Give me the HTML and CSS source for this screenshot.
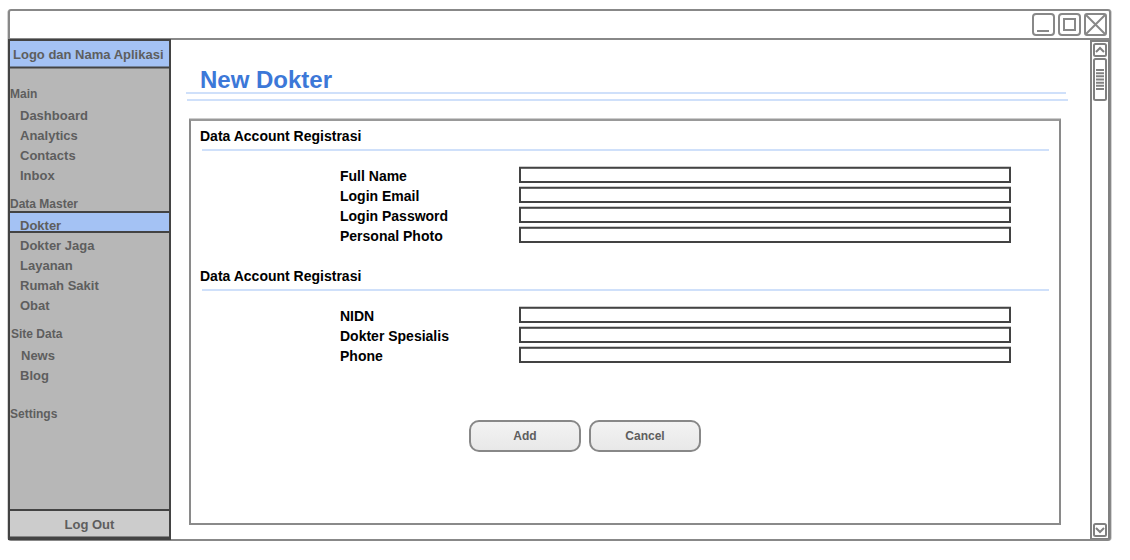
FILE: index.html
```html
<!DOCTYPE html>
<html lang="id">
<head>
<meta charset="utf-8">
<title>New Dokter</title>
<link rel="stylesheet" href="styles.css">
</head>
<body>
<div class="window">
  <header class="titlebar">
    <svg class="controls" width="78" height="26" viewBox="0 0 78 26">
      <rect x="3" y="3" width="21" height="21" rx="3"/>
      <path d="M7 20h12"/>
      <rect x="29" y="3" width="21" height="21" rx="3"/>
      <rect x="34" y="8" width="11" height="11"/>
      <rect x="55" y="3" width="21" height="21" rx="2"/>
      <path d="M55.500 3.500l20 20M75.500 3.500l-20 20"/>
    </svg>
  </header>
  <div class="body">
    <aside class="sidebar">
      <div class="brand">Logo dan Nama Aplikasi</div>
      <nav class="menu">
        <h2 class="group">Main</h2>
        <a class="item">Dashboard</a>
        <a class="item">Analytics</a>
        <a class="item">Contacts</a>
        <a class="item">Inbox</a>
        <h2 class="group">Data Master</h2>
        <a class="item active">Dokter</a>
        <a class="item">Dokter Jaga</a>
        <a class="item">Layanan</a>
        <a class="item">Rumah Sakit</a>
        <a class="item">Obat</a>
        <h2 class="group shifted">Site Data</h2>
        <a class="item shifted">News</a>
        <a class="item">Blog</a>
        <h2 class="group settings">Settings</h2>
      </nav>
      <div class="logout">Log Out</div>
    </aside>
    <main class="main">
      <h1 class="title">New Dokter</h1>
      <div class="rule"></div>
      <div class="rule lower"></div>
      <form class="panel">
        <h3 class="legend">Data Account Registrasi</h3>
        <div class="fields">
          <label class="field"><span>Full Name</span><input type="text"></label>
          <label class="field"><span>Login Email</span><input type="text"></label>
          <label class="field"><span>Login Password</span><input type="text"></label>
          <label class="field"><span>Personal Photo</span><input type="text"></label>
        </div>
        <h3 class="legend">Data Account Registrasi</h3>
        <div class="fields">
          <label class="field"><span>NIDN</span><input type="text"></label>
          <label class="field"><span>Dokter Spesialis</span><input type="text"></label>
          <label class="field"><span>Phone</span><input type="text"></label>
        </div>
        <div class="actions">
          <button class="button" type="button">Add</button>
          <button class="button" type="button">Cancel</button>
        </div>
      </form>
    </main>
    <div class="scrollbar">
      <svg width="14" height="14" viewBox="0 0 14 14"><rect x="1" y="1" width="12" height="12" rx="1.500"/><path d="M3 9l4-4 4 4"/></svg>
      <svg class="thumb" width="14" height="43" viewBox="0 0 14 43">
        <rect x="1" y="1" width="12" height="41" rx="1.500"/>
        <path d="M3 12h8M3 15.170h8M3 18.340h8M3 21.500h8M3 24.670h8M3 27.840h8M3 31h8"/>
      </svg>
      <svg class="down" width="14" height="14" viewBox="0 0 14 14"><rect x="1" y="1" width="12" height="12" rx="1.500"/><path d="M3 5l4 4 4-4"/></svg>
    </div>
  </div>
</div>
</body>
</html>
```
FILE: styles.css
```css
* { box-sizing: border-box; }
body {
  margin: 0;
  padding: 9px 0 0 8px;
  background: #fff;
  font-family: "Liberation Sans", Arial, sans-serif;
  font-weight: bold;
}
h1, h2, h3 { margin: 0; }
.window {
  display: flex;
  flex-direction: column;
  width: 1103px;
  height: 532px;
  border: 2px solid #888;
  border-radius: 3px;
  box-shadow: 1px 0 0 -0.5px #aaa, -1px 0 0 -0.5px #aaa;
}
.titlebar {
  display: flex;
  justify-content: flex-end;
  height: 29px;
  padding-right: 1px;
  border-bottom: 2px solid #888;
}
.controls {
  fill: none;
  stroke: #888;
  stroke-width: 2;
}
.body { display: flex; flex: 1; min-height: 0; }

.sidebar {
  display: flex;
  flex-direction: column;
  width: 163px;
  margin: -1px 0 -1px -2px;
  border: 2px solid #434343;
  border-bottom-width: 3px;
  background: #b7b7b7;
  color: #5e5e5e;
  position: relative;
}
.brand {
  height: 28px;
  padding-left: 3px;
  background: linear-gradient(#a4c2f4 25px, #74839b 25px 26px, #434343 26px 27px, #7d7d7d 27px);
  font-size: 13px;
  line-height: 27px;
  white-space: nowrap;
}
.menu { flex: 1; padding-top: 15px; }
.group {
  height: 20px;
  font-size: 12px;
  line-height: 20px;
}
.item {
  display: block;
  height: 20px;
  padding-left: 10px;
  font-size: 13px;
  line-height: 20px;
}
.group + .item { margin-top: 2px; }
.item + .group { margin-top: 8px; }
.item + .settings { margin-top: 18px; }
.group.shifted { padding-left: 1px; }
.item.shifted { padding-left: 11px; }
.group + .active {
  height: 22px;
  margin: -3px 0 3px;
  border: solid #434343;
  border-width: 2px 0;
  background: #a4c2f4;
  line-height: 26px;
}
.logout {
  height: 28px;
  border-top: 2px solid #434343;
  border-bottom: 1px solid #858585;
  background: #ccc;
  font-size: 13px;
  line-height: 27px;
  text-align: center;
}

.main { flex: 1; padding: 23px 22px 0 15px; }
.title {
  height: 29px;
  padding-left: 14px;
  color: #3c78d8;
  font-size: 24px;
  line-height: 34px;
}
.rule { width: 880px; height: 2px; background: #cfe0fa; }
.title + .rule { position: relative; z-index: -1; }
.lower { width: 881px; margin: 5px 0 18px 1px; }
.panel {
  width: 872px;
  height: 406px;
  margin-left: 3px;
  padding: 5px 10px 0 9px;
  border: 2px solid #8a8a8a;
  border-top-color: #999;
  box-shadow: 0 -1px 0 #ccc;
}
.legend {
  width: 849px;
  height: 25px;
  font-size: 14px;
  line-height: 20px;
  background: linear-gradient(#cfe0fa, #cfe0fa) 2px 23px / 847px 2px no-repeat;
}
.fields { padding: 15px 0 20px 140px; }
.field {
  display: flex;
  align-items: center;
  height: 20px;
  color: #000;
  font-size: 14px;
}
.field span { width: 179px; line-height: 20px; }
.field input {
  width: 492px;
  height: 16px;
  margin: 0 0 2px;
  padding: 0 4px;
  border: 2px solid #434343;
  border-radius: 0;
  background: linear-gradient(#6a6a6a 1px, #fff 1px);
  background-origin: border-box;
  background-clip: border-box;
  border-top: 1px solid #434343;
  box-shadow: 0 -1px 0 #ccc;
  background-position: 0 1px;
  background-repeat: no-repeat;
}
.actions { display: flex; gap: 8px; padding: 34px 0 0 269px; }
.button {
  width: 112px;
  height: 32px;
  padding: 0 0 1px;
  border: 2px solid #888;
  border-radius: 10px;
  background: linear-gradient(#f3f3f3, #e8e8e8);
  color: #5e5e5e;
  font: bold 12px "Liberation Sans", Arial, sans-serif;
}

.scrollbar {
  display: flex;
  flex-direction: column;
  align-items: center;
  width: 20px;
  margin-right: -1px;
  padding: 1px 0;
  border: 2px solid #808080;
  border-bottom-width: 1px;
}
.scrollbar svg { flex: none; fill: none; stroke: #808080; stroke-width: 2; }
.scrollbar .thumb { margin-top: 1px; }
.scrollbar .down { margin-top: auto; }
```
